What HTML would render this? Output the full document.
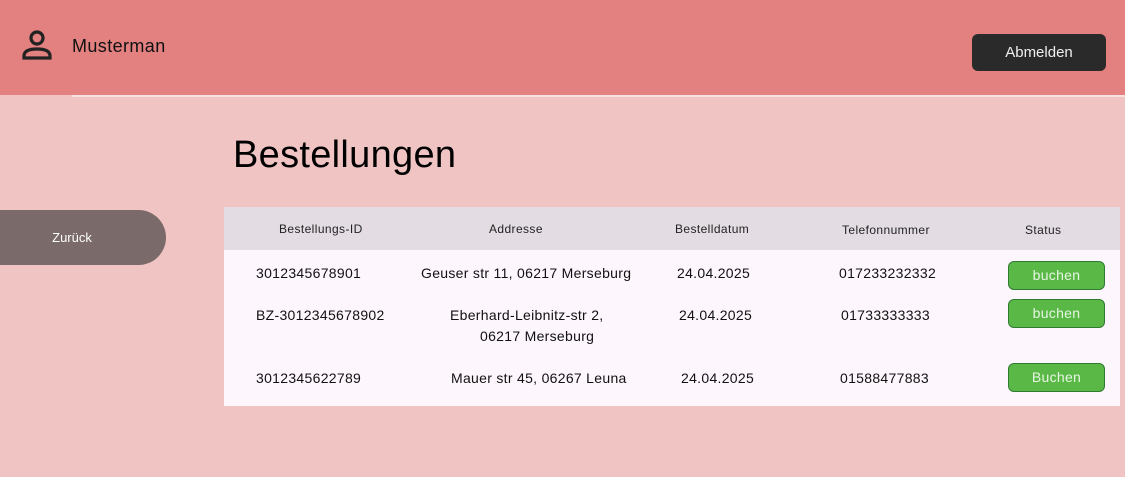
<!DOCTYPE html>
<html><head><meta charset="utf-8"><style>
*{margin:0;padding:0;box-sizing:border-box}
body{width:1125px;height:477px;background:#f1c4c4;font-family:"Liberation Sans",sans-serif;position:relative;overflow:hidden;color:#111}
.a{position:absolute;white-space:nowrap}
.hdr{position:absolute;left:0;top:0;width:1125px;height:95px;background:#e38080}
.line{position:absolute;left:72px;top:95px;width:1053px;height:2px;background:#f6e0e0}
.btn{position:absolute;left:1008px;width:97px;height:29px;background:#5ab946;border:1px solid #2f7a30;border-radius:6px;color:#e8f5e4;font-size:14px;text-align:center;line-height:27px;letter-spacing:0.3px}
.t{font-size:14px;letter-spacing:0.3px}
.h{font-size:12px;color:#222;letter-spacing:0.4px}
</style></head><body>
<div class="hdr"></div>
<div class="line"></div>
<svg class="a" style="left:21px;top:30px" width="32" height="30" viewBox="0 0 32 30"><circle cx="16" cy="8" r="6" fill="none" stroke="#222" stroke-width="3.2"/><path d="M3 28 V26 Q3 19 16 19 Q29 19 29 26 V28 Z" fill="none" stroke="#222" stroke-width="3.2"/></svg>
<div class="a" style="left:72px;top:36px;font-size:18px;letter-spacing:0.4px">Musterman</div>
<div class="a" style="left:972px;top:34px;width:134px;height:37px;background:#2a2a2a;border-radius:6px;color:#eee;font-size:15px;text-align:center;line-height:37px">Abmelden</div>
<div class="a" style="left:233px;top:134px;font-size:38px;color:#000;letter-spacing:0.3px">Bestellungen</div>
<div class="a" style="left:0;top:210px;width:166px;height:55px;background:#7a6a6a;border-radius:0 28px 28px 0;color:#fff;font-size:13px;text-align:center;line-height:55px;padding-right:22px">Zurück</div>
<div class="a" style="left:224px;top:207px;width:896px;height:199px;background:#fdf6fd"></div>
<div class="a" style="left:224px;top:207px;width:896px;height:43px;background:#e3dde3"></div>
<div class="a h" style="left:279px;top:222px">Bestellungs-ID</div>
<div class="a h" style="left:489px;top:222px">Addresse</div>
<div class="a h" style="left:675px;top:222px">Bestelldatum</div>
<div class="a h" style="left:842px;top:223px">Telefonnummer</div>
<div class="a h" style="left:1025px;top:223px">Status</div>
<div class="a t" style="left:256px;top:265px">3012345678901</div>
<div class="a t" style="left:421px;top:265px">Geuser str 11, 06217 Merseburg</div>
<div class="a t" style="left:677px;top:265px">24.04.2025</div>
<div class="a t" style="left:839px;top:265px">017233232332</div>
<div class="btn" style="top:261px">buchen</div>
<div class="a t" style="left:256px;top:307px">BZ-3012345678902</div>
<div class="a t" style="left:450px;top:307px">Eberhard-Leibnitz-str 2,</div>
<div class="a t" style="left:480px;top:328px">06217 Merseburg</div>
<div class="a t" style="left:679px;top:307px">24.04.2025</div>
<div class="a t" style="left:841px;top:307px">01733333333</div>
<div class="btn" style="top:299px">buchen</div>
<div class="a t" style="left:256px;top:370px">3012345622789</div>
<div class="a t" style="left:451px;top:370px">Mauer str 45, 06267 Leuna</div>
<div class="a t" style="left:681px;top:370px">24.04.2025</div>
<div class="a t" style="left:840px;top:370px">01588477883</div>
<div class="btn" style="top:363px">Buchen</div>
</body></html>
